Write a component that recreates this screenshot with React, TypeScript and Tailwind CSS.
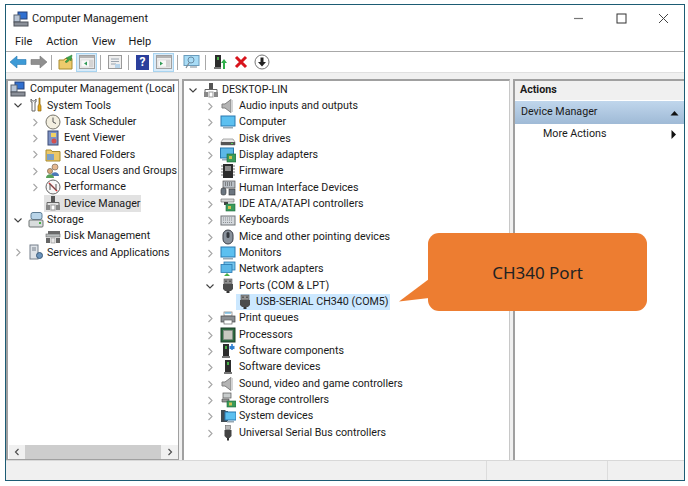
import type { ReactNode } from 'react';

type IconName =
  | 'computer' | 'tools' | 'clock' | 'event' | 'folder' | 'users' | 'perf' | 'devmgr' | 'storage' | 'disk' | 'services'
  | 'speaker' | 'monitor' | 'drive' | 'display' | 'chip' | 'hid' | 'ide' | 'keyboard' | 'mouse' | 'network' | 'port'
  | 'printer' | 'cpu' | 'softcomp' | 'softdev' | 'storctl' | 'system' | 'usb';

const icons: Record<IconName, ReactNode> = {
  computer: (
    <>
      <rect x="5" y="1" width="9" height="7" fill="#2f6fd0" stroke="#24407a" />
      <rect x="1" y="4" width="6" height="7" fill="#b8c4d4" stroke="#5b6472" />
      <rect x="1" y="11" width="14" height="4" fill="#8a8f98" stroke="#4c5058" />
    </>
  ),
  tools: (
    <>
      <path d="M3 2v3h1v9h3V5h1V2L6.500 4h-2z" fill="#fff" stroke="#666" />
      <path d="M11 1v6l-1 2v5h3V9l-1-2V1z" fill="#e6a817" stroke="#8a6410" strokeWidth="0.700" />
    </>
  ),
  clock: (
    <>
      <circle cx="8" cy="8" r="7" fill="#f3efe0" stroke="#77756a" />
      <path d="M8 3.500V8l3 1.500" fill="none" stroke="#555" />
    </>
  ),
  event: (
    <>
      <rect x="3" y="1" width="10" height="14" fill="#7e93c4" stroke="#3c4c78" />
      <rect x="6" y="3" width="5" height="4" fill="#f0d264" />
      <circle cx="9" cy="11" r="2.500" fill="#d25050" />
    </>
  ),
  folder: (
    <>
      <path d="M1 4h5l1 1.500h8V15H1z" fill="#ecc868" stroke="#a88b30" />
      <rect x="2" y="8" width="7" height="6" fill="#7ba0c8" />
    </>
  ),
  users: (
    <>
      <circle cx="10" cy="4" r="3" fill="#e5b890" stroke="#6b5a4a" strokeWidth="0.600" />
      <path d="M6 13c0-5 8-5 8 0z" fill="#4b78b8" />
      <circle cx="5" cy="8" r="2.600" fill="#d8a878" stroke="#6b5a4a" strokeWidth="0.600" />
      <path d="M1 15c0-5 8-5 8 0z" fill="#58a05a" />
    </>
  ),
  perf: (
    <>
      <circle cx="8" cy="8" r="7" fill="#f7f7f7" stroke="#666" />
      <path d="M4 4l8 8" stroke="#d23030" strokeWidth="1.600" />
      <path d="M5 11V5l6 6V5" fill="none" stroke="#555" />
    </>
  ),
  devmgr: (
    <>
      <rect x="6" y="1" width="4" height="6" fill="#555" />
      <path d="M2 10V7.500h12V10" fill="none" stroke="#666" />
      <rect x="1" y="10" width="4" height="5" fill="#888" />
      <rect x="11" y="10" width="4" height="5" fill="#888" />
      <rect x="6" y="10" width="4" height="5" fill="#fff" stroke="#999" />
    </>
  ),
  storage: (
    <>
      <rect x="3" y="0.500" width="11" height="7" rx="2" fill="#b8d4e8" stroke="#5c7c94" />
      <rect x="1" y="8" width="14" height="7" rx="1" fill="#d8dcdc" stroke="#6c7272" />
      <rect x="11" y="10" width="2" height="2" fill="#48b048" />
    </>
  ),
  disk: (
    <>
      <rect x="3" y="3" width="12" height="3" fill="#6a6a6a" />
      <rect x="1" y="6" width="14" height="3" fill="#b8bcbc" stroke="#666" strokeWidth="0.600" />
      <rect x="1" y="10" width="4" height="5" fill="#666" />
      <rect x="6" y="10" width="4" height="5" fill="#e8e8e8" stroke="#888" strokeWidth="0.600" />
      <rect x="11" y="10" width="4" height="5" fill="#666" />
    </>
  ),
  services: (
    <>
      <rect x="2" y="1" width="8" height="14" fill="#dfe3e8" stroke="#77808c" />
      <path d="M4 4h4M4 6h4" stroke="#77808c" />
      <circle cx="11.500" cy="11.500" r="3" fill="#6c94bc" stroke="#3c5c7c" />
    </>
  ),
  speaker: (
    <>
      <path d="M2 6h3l6-4.500v13L5 10H2z" fill="#b4b4b4" stroke="#808080" />
      <path d="M11 2v12h2V2z" fill="#d4d4d4" />
    </>
  ),
  monitor: (
    <>
      <rect x="1" y="2" width="14" height="10" fill="#5cc0f0" stroke="#2878b0" />
      <rect x="3" y="13" width="10" height="1.500" fill="#96a8b4" />
    </>
  ),
  drive: (
    <>
      <path d="M3 8h10l2 3v3H1v-3z" fill="#e8e8e8" stroke="#777" strokeWidth="0.600" />
      <rect x="1" y="11" width="14" height="3" fill="#555" />
      <rect x="11" y="12" width="2" height="1" fill="#58d058" />
    </>
  ),
  display: (
    <>
      <rect x="0.500" y="1" width="13" height="10" fill="#5cb8e8" stroke="#2878b0" />
      <rect x="2" y="12" width="8" height="1.500" fill="#99aabb" />
      <rect x="7" y="7" width="9" height="8" fill="#3a9a5a" stroke="#1c6a3a" strokeWidth="0.600" />
      <rect x="9" y="9" width="3" height="3" fill="#d0c050" />
    </>
  ),
  chip: (
    <>
      <rect x="3" y="1" width="10" height="14" fill="#2c2c2c" />
      <path d="M1 3h2M1 6h2M1 9h2M1 12h2M13 3h2M13 6h2M13 9h2M13 12h2" stroke="#777" />
      <rect x="5" y="3" width="6" height="5" fill="#8c8c8c" />
    </>
  ),
  hid: (
    <>
      <rect x="3" y="1" width="12" height="7" fill="#b8bec4" stroke="#555" strokeWidth="0.700" />
      <path d="M5 3h8M5 5h8" stroke="#444" strokeDasharray="1 1" />
      <rect x="1" y="8" width="5" height="7" rx="2" fill="#6c7680" stroke="#333" strokeWidth="0.600" />
      <rect x="9" y="9" width="6" height="6" fill="#6c7680" stroke="#333" strokeWidth="0.600" />
    </>
  ),
  ide: (
    <>
      <path d="M1 3h13v3H1z" fill="#d8d8d8" stroke="#666" strokeWidth="0.600" />
      <path d="M4 6h4v3H4z" fill="#444" />
      <rect x="6" y="8" width="9" height="7" fill="#3a9a5a" stroke="#1c6a3a" strokeWidth="0.600" />
      <rect x="8" y="10" width="3" height="3" fill="#d0c050" />
    </>
  ),
  keyboard: (
    <>
      <rect x="1" y="4" width="14" height="9" fill="#d4d8dc" stroke="#707478" />
      <path d="M3 6h10M3 8h10M3 10.500h10" stroke="#8a8e92" strokeDasharray="1 1" />
    </>
  ),
  mouse: (
    <>
      <rect x="3" y="1" width="10" height="14" rx="5" fill="#8a929c" stroke="#3c4048" />
      <rect x="6.500" y="3" width="3" height="6" rx="1.500" fill="#34383e" />
    </>
  ),
  network: (
    <>
      <rect x="4" y="1" width="11" height="8" fill="#74c4ec" stroke="#2878b0" strokeWidth="0.800" />
      <rect x="1" y="3.500" width="11" height="8" fill="#5cb8e8" stroke="#2878b0" strokeWidth="0.800" />
      <path d="M4 15l3-3 3 3z" fill="#48b048" />
    </>
  ),
  port: (
    <>
      <rect x="4" y="1" width="8" height="5" fill="#909090" stroke="#555" strokeWidth="0.600" />
      <path d="M6 2.500v1.500M10 2.500v1.500" stroke="#222" />
      <path d="M3 6h10v5l-2 2H5l-2-2z" fill="#4c4c4c" />
      <rect x="6.500" y="13" width="3" height="2" fill="#333" />
    </>
  ),
  printer: (
    <>
      <rect x="4" y="2" width="8" height="4" fill="#fff" stroke="#777" strokeWidth="0.700" />
      <path d="M5 3h6" stroke="#38a0d8" />
      <rect x="1" y="6" width="14" height="6" fill="#8c9094" stroke="#444" strokeWidth="0.700" />
      <rect x="4" y="10" width="8" height="4" fill="#fff" stroke="#666" strokeWidth="0.700" />
    </>
  ),
  cpu: (
    <>
      <rect x="1" y="1" width="14" height="14" fill="#2e6a40" stroke="#1a3c26" />
      <rect x="3.500" y="3.500" width="9" height="9" fill="#c8c8c0" stroke="#888" strokeWidth="0.600" />
    </>
  ),
  softcomp: (
    <>
      <rect x="3" y="1" width="6" height="12" fill="#2c2c2c" />
      <rect x="5" y="3" width="2" height="3" fill="#48b048" />
      <rect x="2" y="13" width="8" height="2" fill="#777" />
      <path d="M12 1v6M9.500 3.500l5 2M14.500 3.500l-5 2" stroke="#2d7fd0" strokeWidth="1.600" />
    </>
  ),
  softdev: (
    <>
      <rect x="5" y="1" width="6" height="12" fill="#2c2c2c" />
      <rect x="7" y="3" width="2" height="3" fill="#48b048" />
      <rect x="4" y="13" width="8" height="2" fill="#777" />
    </>
  ),
  storctl: (
    <>
      <rect x="3" y="1" width="8" height="5" fill="#c8cccc" stroke="#555" strokeWidth="0.700" />
      <path d="M2 7h7v3H2z" fill="#999" stroke="#444" strokeWidth="0.600" />
      <rect x="7" y="9" width="9" height="6" fill="#3a9a5a" stroke="#1c6a3a" strokeWidth="0.600" />
      <rect x="9" y="10.500" width="3" height="3" fill="#d0c050" />
    </>
  ),
  system: (
    <>
      <path d="M1 2h4l1 1h2v11H1z" fill="#3f4a52" />
      <rect x="5" y="4" width="11" height="8" fill="#5cc0f0" stroke="#2878b0" />
      <rect x="7" y="13" width="7" height="1.500" fill="#96a8b4" />
    </>
  ),
  usb: (
    <>
      <rect x="5.500" y="0.500" width="5" height="4" fill="#bbb" stroke="#666" strokeWidth="0.600" />
      <path d="M4.500 5h7v6l-2 2h-3l-2-2z" fill="#444" />
      <rect x="7" y="13" width="2" height="2.500" fill="#333" />
    </>
  ),
};

function Icon({ name, className = '' }: { name: IconName; className?: string }) {
  return (
    <svg width="16" height="16" viewBox="0 0 16 16" className={`shrink-0 ${className}`}>
      {icons[name]}
    </svg>
  );
}

function Chevron({ open }: { open?: boolean }) {
  return (
    <svg width="16" height="16" viewBox="0 0 16 16" className="shrink-0">
      {open ? (
        <path d="M4.500 6.500L8 10l3.500-3.500" fill="none" stroke="#404040" strokeWidth="1.100" />
      ) : (
        <path d="M6.500 5L10 8.500 6.500 12" fill="none" stroke="#a6a6a6" strokeWidth="1.100" />
      )}
    </svg>
  );
}

type TreeItem = {
  label: string;
  icon: IconName;
  indent: string;
  chevron?: 'open' | 'closed';
  selected?: string;
};

function Row({ item }: { item: TreeItem }) {
  return (
    <div className={`flex h-[16.33px] items-center whitespace-nowrap ${item.indent}`}>
      {item.chevron ? <Chevron open={item.chevron === 'open'} /> : <span className="w-4 shrink-0" />}
      <div className={`ml-[1px] flex h-[16.33px] items-center pl-[1px] pr-[1px] ${item.selected ?? ''}`}>
        <Icon name={item.icon} />
        <span className="ml-[3px] pt-[1px]">{item.label}</span>
      </div>
    </div>
  );
}

const leftTree: TreeItem[] = [
  { label: 'System Tools', icon: 'tools', indent: 'pl-[1px]', chevron: 'open' },
  { label: 'Task Scheduler', icon: 'clock', indent: 'pl-[18px]', chevron: 'closed' },
  { label: 'Event Viewer', icon: 'event', indent: 'pl-[18px]', chevron: 'closed' },
  { label: 'Shared Folders', icon: 'folder', indent: 'pl-[18px]', chevron: 'closed' },
  { label: 'Local Users and Groups', icon: 'users', indent: 'pl-[18px]', chevron: 'closed' },
  { label: 'Performance', icon: 'perf', indent: 'pl-[18px]', chevron: 'closed' },
  { label: 'Device Manager', icon: 'devmgr', indent: 'pl-[18px]', selected: 'bg-[#e2e2e2]' },
  { label: 'Storage', icon: 'storage', indent: 'pl-[1px]', chevron: 'open' },
  { label: 'Disk Management', icon: 'disk', indent: 'pl-[18px]' },
  { label: 'Services and Applications', icon: 'services', indent: 'pl-[1px]', chevron: 'closed' },
];

const mid = 'pl-[17px]';
const deviceTree: TreeItem[] = [
  { label: 'DESKTOP-LIN', icon: 'devmgr', indent: 'pl-0', chevron: 'open' },
  { label: 'Audio inputs and outputs', icon: 'speaker', indent: mid, chevron: 'closed' },
  { label: 'Computer', icon: 'monitor', indent: mid, chevron: 'closed' },
  { label: 'Disk drives', icon: 'drive', indent: mid, chevron: 'closed' },
  { label: 'Display adapters', icon: 'display', indent: mid, chevron: 'closed' },
  { label: 'Firmware', icon: 'chip', indent: mid, chevron: 'closed' },
  { label: 'Human Interface Devices', icon: 'hid', indent: mid, chevron: 'closed' },
  { label: 'IDE ATA/ATAPI controllers', icon: 'ide', indent: mid, chevron: 'closed' },
  { label: 'Keyboards', icon: 'keyboard', indent: mid, chevron: 'closed' },
  { label: 'Mice and other pointing devices', icon: 'mouse', indent: mid, chevron: 'closed' },
  { label: 'Monitors', icon: 'monitor', indent: mid, chevron: 'closed' },
  { label: 'Network adapters', icon: 'network', indent: mid, chevron: 'closed' },
  { label: 'Ports (COM & LPT)', icon: 'port', indent: mid, chevron: 'open' },
  { label: 'USB-SERIAL CH340 (COM5)', icon: 'port', indent: 'pl-[34px]', selected: 'bg-[#cce8ff]' },
  { label: 'Print queues', icon: 'printer', indent: mid, chevron: 'closed' },
  { label: 'Processors', icon: 'cpu', indent: mid, chevron: 'closed' },
  { label: 'Software components', icon: 'softcomp', indent: mid, chevron: 'closed' },
  { label: 'Software devices', icon: 'softdev', indent: mid, chevron: 'closed' },
  { label: 'Sound, video and game controllers', icon: 'speaker', indent: mid, chevron: 'closed' },
  { label: 'Storage controllers', icon: 'storctl', indent: mid, chevron: 'closed' },
  { label: 'System devices', icon: 'system', indent: mid, chevron: 'closed' },
  { label: 'Universal Serial Bus controllers', icon: 'usb', indent: mid, chevron: 'closed' },
];

function Sep() {
  return <span className="mx-[3px] h-[15px] w-px bg-[#a8a8a8]" />;
}

function Tool({ children, active }: { children: ReactNode; active?: boolean }) {
  return (
    <span
      className={`flex h-[19px] w-[21px] items-center justify-center border ${
        active ? 'border-[#a8d4f0] bg-[#d8ebf9]' : 'border-transparent'
      }`}
    >
      {children}
    </span>
  );
}

function PaneIcon({ side }: { side: 'left' | 'right' }) {
  return (
    <svg width="16" height="14" viewBox="0 0 16 14">
      <rect x="0.500" y="0.500" width="15" height="13" fill="#eeeeee" stroke="#a0a0a0" />
      <rect x="1" y="1" width="14" height="2" fill="#b4b4b4" />
      <rect x="2" y="5" width="12" height="7" fill="#f8f8f8" stroke="#cccccc" strokeWidth="0.500" />
      <rect x="10" y="5" width="4" height="7" fill="#d4d4d4" />
      {side === 'left' ? (
        <path d="M8 6.500L5 8.500l3 2z" fill="#2f9a55" />
      ) : (
        <path d="M4 6.500l3 2-3 2z" fill="#2f9a55" />
      )}
    </svg>
  );
}

function Toolbar() {
  return (
    <div className="flex h-[21px] items-center border-b border-[#e0e0e0] pl-[2px]">
      <svg width="18" height="16" viewBox="0 0 18 16" className="ml-[1px]">
        <path d="M1 8l7-6v3.500h9v5H8V14z" fill="#3d9ad6" stroke="#2a78b0" strokeWidth="0.600" />
      </svg>
      <svg width="18" height="16" viewBox="0 0 18 16" className="ml-[3px]">
        <path d="M17 8l-7-6v3.500H1v5h9V14z" fill="#8f8f8f" stroke="#777" strokeWidth="0.600" />
      </svg>
      <Sep />
      <Tool>
        <svg width="16" height="16" viewBox="0 0 16 16">
          <path d="M1 6h5l1-1.500h7V15H1z" fill="#eecb6c" stroke="#a88b30" />
          <path d="M7 8l3-3-2-1 6-3-1 6-1-1.500-3 3z" fill="#3ca84a" stroke="#23742e" strokeWidth="0.500" />
        </svg>
      </Tool>
      <Tool active>
        <PaneIcon side="left" />
      </Tool>
      <Sep />
      <Tool>
        <svg width="16" height="16" viewBox="0 0 16 16">
          <rect x="1.500" y="1.500" width="13" height="13" fill="#efefef" stroke="#999" />
          <path d="M4 5h8M4 7.500h8M4 10h5" stroke="#9aa4ae" />
          <rect x="8" y="10" width="5" height="4" fill="#b8d4ea" />
        </svg>
      </Tool>
      <Sep />
      <Tool>
        <span className="flex h-[15px] w-[13px] items-center justify-center bg-[#2b3f9c] text-[12px] font-bold leading-none text-white">?</span>
      </Tool>
      <Tool active>
        <PaneIcon side="right" />
      </Tool>
      <Sep />
      <Tool>
        <svg width="17" height="16" viewBox="0 0 17 16">
          <rect x="1" y="1.500" width="15" height="10" fill="#a8dcf6" stroke="#6a9cbc" />
          <circle cx="8" cy="6" r="3" fill="none" stroke="#6a8ca4" />
          <path d="M6 9l-3 5M7 13h7" stroke="#7d8a94" strokeWidth="1.200" />
        </svg>
      </Tool>
      <Sep />
      <Tool>
        <svg width="16" height="16" viewBox="0 0 16 16">
          <rect x="3" y="1" width="6" height="12" fill="#2c2c2c" />
          <rect x="5" y="3" width="2" height="3" fill="#48b048" />
          <rect x="2" y="13" width="7" height="2" fill="#777" />
          <path d="M12 5l-3 4h2v6h2V9h2z" fill="#2fb04a" />
        </svg>
      </Tool>
      <Tool>
        <svg width="14" height="14" viewBox="0 0 14 14">
          <path d="M2 2l10 10M12 2L2 12" stroke="#d8141c" strokeWidth="3" />
        </svg>
      </Tool>
      <Tool>
        <svg width="16" height="16" viewBox="0 0 16 16">
          <circle cx="8" cy="8" r="7" fill="#fff" stroke="#777" />
          <path d="M6.500 3.500h3V8H12l-4 4.500L4 8h2.500z" fill="#222" />
        </svg>
      </Tool>
    </div>
  );
}

export default function App() {
  return (
    <div
      className="relative h-[486px] w-[688px] overflow-hidden bg-white pl-[5px] pr-[3px] pt-[4px] text-[10.7px] leading-none text-[#1a1a1a]"
      style={{ fontFamily: 'Roboto, "Noto Sans", sans-serif' }}
    >
      <div className="flex h-[477px] flex-col border border-[#1d5c74] bg-white">
        <div className="flex h-[27px] shrink-0 items-center pl-[7px]">
          <Icon name="computer" />
          <span className="ml-[3px] text-[11px]">Computer Management</span>
          <div className="ml-auto flex items-center pr-[15px]">
            <svg width="11" height="11" viewBox="0 0 11 11" className="mr-[32px]">
              <path d="M1 5.500h9" stroke="#777" strokeWidth="1.200" />
            </svg>
            <svg width="11" height="11" viewBox="0 0 11 11" className="mr-[31px]">
              <rect x="1" y="1" width="9" height="9" fill="none" stroke="#333" />
            </svg>
            <svg width="11" height="11" viewBox="0 0 11 11">
              <path d="M1 1l9 9M10 1l-9 9" stroke="#444" />
            </svg>
          </div>
        </div>
        <div className="flex h-[20px] shrink-0 items-center border-b border-[#a8a8a8] pl-[9px] text-[11px]">
          <span>File</span>
          <span className="ml-[14px]">Action</span>
          <span className="ml-[14px]">View</span>
          <span className="ml-[13px]">Help</span>
        </div>
        <Toolbar />
        <div className="flex min-h-0 flex-1 gap-[3px] bg-[#f0f0f0] pt-[6px]">
          <div className="flex w-[173px] shrink-0 flex-col border-b border-l-2 border-r border-t-2 border-[#a0a0a0] bg-white pl-[1px]">
            <div className="flex-1 overflow-hidden">
              <div className="flex h-[16.33px] items-center whitespace-nowrap pl-[1px]">
                <Icon name="computer" />
                <span className="ml-[4px] pt-[1px]">Computer Management (Local</span>
              </div>
              {leftTree.map((item) => (
                <Row key={item.label} item={item} />
              ))}
            </div>
            <div className="flex h-[14px] items-center bg-[#f0f0f0]">
              <span className="flex w-[16px] justify-center">
                <svg width="8" height="8" viewBox="0 0 8 8">
                  <path d="M5.500 1L2.500 4l3 3" fill="none" stroke="#505050" strokeWidth="1.200" />
                </svg>
              </span>
              <span className="h-full flex-1 bg-[#cdcdcd]" />
              <span className="flex w-[17px] justify-center">
                <svg width="8" height="8" viewBox="0 0 8 8">
                  <path d="M2.500 1l3 3-3 3" fill="none" stroke="#505050" strokeWidth="1.200" />
                </svg>
              </span>
            </div>
          </div>
          <div className="w-[328px] shrink-0 border-l-2 border-r border-t-2 border-[#a0a0a0] border-r-[#c8c8c8] bg-white pl-[1px] pt-[0.5px]">
            {deviceTree.map((item) => (
              <Row key={item.label} item={item} />
            ))}
          </div>
          <div className="min-w-0 flex-1 border-l-2 border-t-2 border-[#a0a0a0] bg-white">
            <div className="flex h-[19px] items-center bg-[#f0f0f0] pl-[5px] font-bold">Actions</div>
            <div className="mt-[1px] flex h-[23px] items-center justify-between bg-gradient-to-b from-[#c0d6ec] to-[#9fbad6] pl-[6px] pr-[5px]">
              <span>Device Manager</span>
              <svg width="9" height="6" viewBox="0 0 9 6">
                <path d="M0.500 5.500L4.500 1l4 4.500z" fill="#111" />
              </svg>
            </div>
            <div className="flex h-[21px] items-center justify-between pl-[28px] pr-[8px]">
              <span>More Actions</span>
              <svg width="5" height="9" viewBox="0 0 5 9">
                <path d="M0.500 0L5 4.500 0.500 9z" fill="#111" />
              </svg>
            </div>
          </div>
        </div>
        <div className="flex h-[20px] shrink-0 border-t border-[#d8d8d8] bg-[#f0f0f0]">
          <span className="w-[480px]" />
          <span className="w-[121px] border-l border-[#dcdcdc]" />
          <span className="flex-1 border-l border-[#dcdcdc]" />
        </div>
      </div>

      <svg width="32" height="26" viewBox="0 0 32 26" className="absolute left-[398px] top-[277px]">
        <path d="M31 2L1 24.500 31 21z" fill="#ed7d31" />
      </svg>
      <div
        className="absolute left-[428px] top-[233px] flex h-[78px] w-[219px] items-center justify-center rounded-[11px] bg-[#ed7d31] text-[17px] text-[#222]"
        style={{ fontFamily: '"Noto Sans", sans-serif' }}
      >
        CH340 Port
      </div>
    </div>
  );
}
